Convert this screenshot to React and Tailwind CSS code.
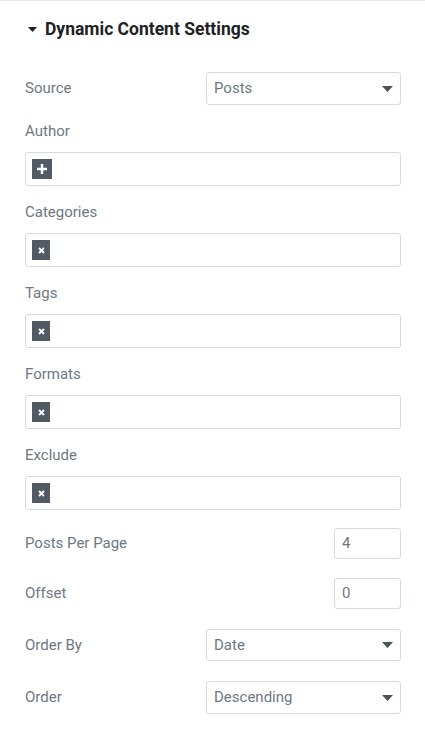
import React from "react";

const Caret = () => (
  <svg width="11" height="6" viewBox="0 0 11 6" className="shrink-0">
    <path d="M0 0h11L5.5 6z" fill="#4d5258" />
  </svg>
);

const SelectBox = ({ value, h = "h-[34px]" }) => (
  <div
    className={`flex items-center justify-between w-[195px] ${h} border border-[#d5dadf] rounded-[3px] pl-[7px] pr-[7px] text-[15px] text-[#6d7882]`}
  >
    <span>{value}</span>
    <Caret />
  </div>
);

const NumberBox = ({ value }) => (
  <div className="flex items-center w-[67px] h-[31px] border border-[#d5dadf] rounded-[3px] pl-[7px] text-[15px] text-[#6d7882]">
    {value}
  </div>
);

const PlusBadge = () => (
  <div className="flex items-center justify-center w-[20px] h-[20px] bg-[#525a63]">
    <svg width="10" height="10" viewBox="0 0 10 10">
      <path d="M5 0v10M0 5h10" stroke="#fff" strokeWidth="2.4" />
    </svg>
  </div>
);

const XBadge = () => (
  <div className="flex items-center justify-center w-[18px] h-[20px] bg-[#525a63]">
    <svg width="7" height="7" viewBox="0 0 7 7">
      <path d="M1 1l5 5M6 1l-5 5" stroke="#fff" strokeWidth="1.8" />
    </svg>
  </div>
);

const TagField = ({ label, badge }) => (
  <div className="mt-[16px]">
    <div className="h-[20px] leading-[20px] text-[15px] text-[#6d7882]">{label}</div>
    <div className="mt-[11px] flex items-center h-[34px] border border-[#d5dadf] rounded-[3px] px-[6px]">
      {badge}
    </div>
  </div>
);

const Row = ({ label, children, mt = "mt-[20px]" }) => (
  <div className={`flex items-center justify-between ${mt}`}>
    <span className="text-[15px] text-[#6d7882]">{label}</span>
    {children}
  </div>
);

export default function App() {
  return (
    <div className="min-h-screen bg-white border-t border-[#e6e9ec] pl-[25px] pr-[24px] font-['Roboto',sans-serif]">
      <div className="flex items-center h-[20px] mt-[18px] ml-[3px] gap-[8px]">
        <svg width="9" height="5" viewBox="0 0 9 5">
          <path d="M0 0h9L4.5 5z" fill="#1f2124" />
        </svg>
        <h2 className="text-[17.5px] font-bold text-[#1f2124]">Dynamic Content Settings</h2>
      </div>

      <Row label="Source" mt="mt-[33px]">
        <SelectBox value="Posts" h="h-[33px]" />
      </Row>

      <TagField label="Author" badge={<PlusBadge />} />
      <TagField label="Categories" badge={<XBadge />} />
      <TagField label="Tags" badge={<XBadge />} />
      <TagField label="Formats" badge={<XBadge />} />
      <TagField label="Exclude" badge={<XBadge />} />

      <Row label="Posts Per Page" mt="mt-[18px]">
        <NumberBox value="4" />
      </Row>
      <Row label="Offset" mt="mt-[19px]">
        <NumberBox value="0" />
      </Row>
      <Row label="Order By">
        <SelectBox value="Date" h="h-[32px]" />
      </Row>
      <Row label="Order">
        <SelectBox value="Descending" h="h-[33px]" />
      </Row>
    </div>
  );
}
